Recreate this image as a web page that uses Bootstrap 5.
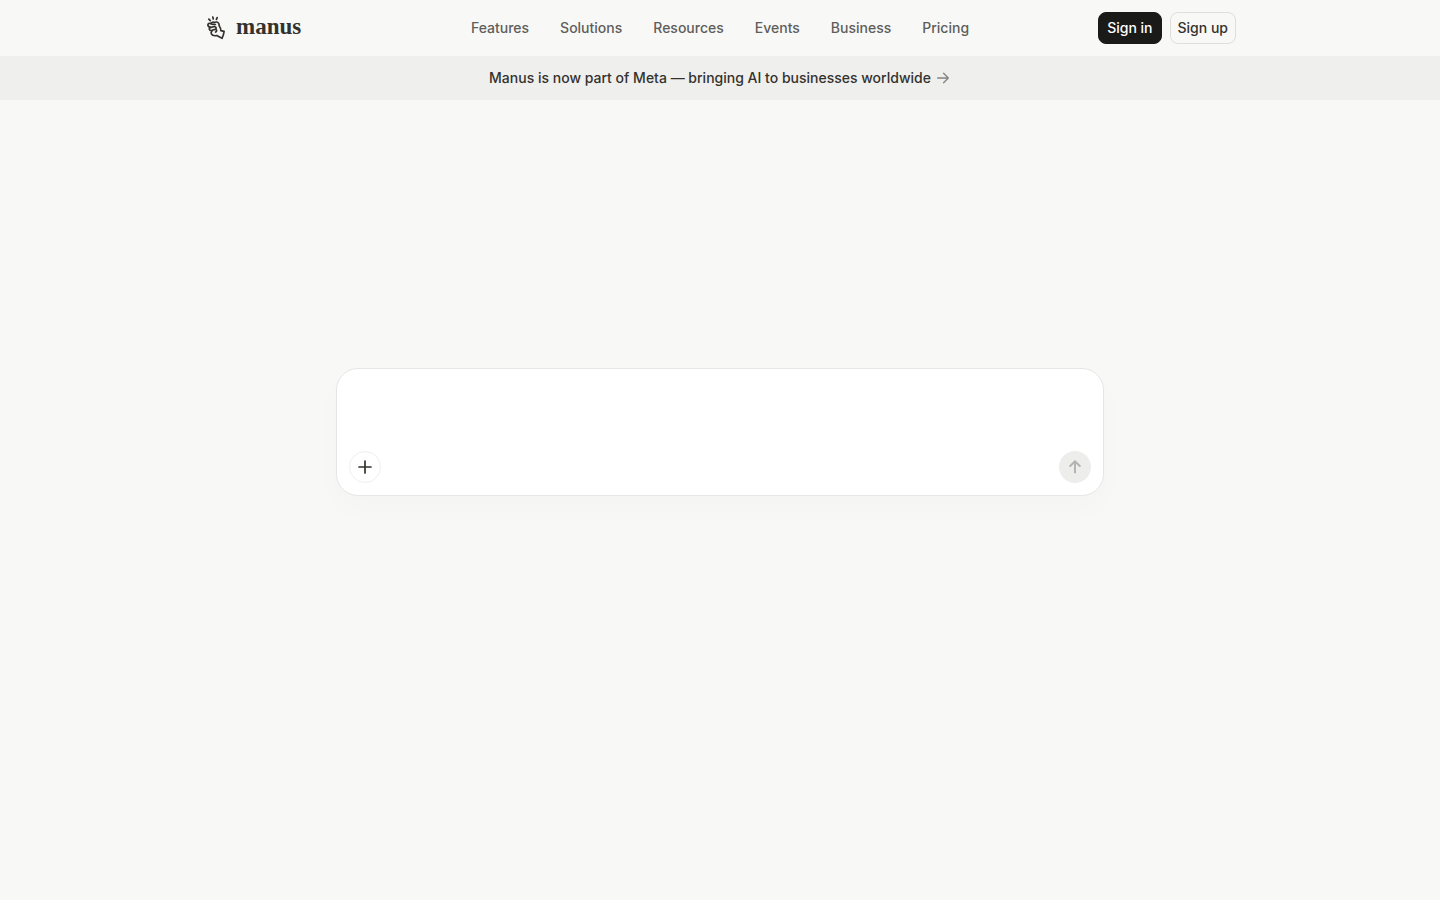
<!DOCTYPE html>
<html lang="en">
<head>
<meta charset="utf-8">
<meta name="viewport" content="width=device-width, initial-scale=1">
<title>Manus</title>
<link href="https://cdn.jsdelivr.net/npm/bootstrap@5.3.0/dist/css/bootstrap.min.css" rel="stylesheet">
<style>
  body { background: #f8f8f7; color: #34322d; font-family: Inter, "Liberation Sans", sans-serif; font-size: 14px; line-height: 20px; font-weight: 500; }
  .site-header { height: 56px; }
  .site-inner { max-width: 1080px; padding: 0 24px; }
  .side { flex: 1 1 0; }
  .wordmark { font-family: "Liberation Serif", serif; font-weight: 700; font-size: 23px; line-height: 24px; padding-bottom: 2px; }
  .brand-link, .brand-link:hover { color: #34322d; }
  .main-nav { gap: 31px; }
  .main-nav .nav-link { padding: 0; color: #5e5e5b; }
  .main-nav .nav-link:hover { color: #34322d; }
  .btn-auth { height: 32px; padding: 0 7px; border-radius: 8px; font-size: 14px; line-height: 20px; font-weight: 500; }
  .btn-in, .btn-in:hover { background: #1a1a19; border-color: #1a1a19; color: #fff; padding: 0 8px; }
  .btn-up, .btn-up:hover { border-color: #dededc; color: #34322d; }
  .announce { background: #efefed; height: 44px; }
  .announce a { color: #34322d; }
  .stage { padding: 0 24px 136px; }
  .composer { max-width: 768px; border: 1px solid #e6e6e5; border-radius: 22px; padding: 12px; box-shadow: 0 12px 32px rgba(0,0,0,.02); }
  .composer textarea { height: 70px; resize: none; border: 0; outline: 0; background: transparent; }
  .btn-round { width: 32px; height: 32px; }
  .btn-add { border: 1px solid #efefee; color: #34322d; }
  .btn-send, .btn-send:disabled { background: #ededec; border: 0; color: #b4b4b2; opacity: 1; }
</style>
</head>
<body class="min-vh-100 d-flex flex-column">
<header class="site-header d-flex align-items-center">
  <div class="site-inner w-100 mx-auto d-flex align-items-center">
    <div class="side d-flex">
      <a href="#" class="brand-link d-flex align-items-center text-decoration-none">
        <svg width="32" height="34" viewBox="4 1 32 34" fill="none" stroke="currentColor" stroke-width="1.7" stroke-linecap="round" stroke-linejoin="round" aria-hidden="true">
          <path d="M8.8 9.1l1.5 1.5M12.8 7l.5 2M17.2 7.6l-.8 1.8"/>
          <path d="M10.4 17.4c-1.8-.5-2.9-1.8-2.4-3.1.5-1.2 1.8-1.3 3-.6.6-1.4 2-1.9 3.3-1.2 1.3-.8 3.4-.7 4.2.7.7 1.2.5 2.4 1.2 3.5.9 1.1 1.3 2.2 1.1 3.9l3.3.8c-.3 2.4-1 4.7-2.1 6.9l-5.2-2.7c-2.4.4-4.6 0-5.4-1.7-.5-1-.3-2 .4-2.6"/>
          <path d="M11 13.7c1 1 2.6.7 4.4.8M10.4 17.4c1.6.1 2.4-1.2 4.2-.8 1.7.4 2.1 2 .8 2.7-1.3.6-2.3.2-3.6 1.3-1.5.2-2.4-.5-2.5-1.6-.1-.7.4-1.3 1.1-1.6M16 19.4c1 .8.8 2-.4 2.7"/>
        </svg>
        <span class="wordmark">manus</span>
      </a>
    </div>
    <nav class="nav main-nav flex-nowrap" aria-label="Main">
      <a class="nav-link" href="#">Features</a>
      <a class="nav-link" href="#">Solutions</a>
      <a class="nav-link" href="#">Resources</a>
      <a class="nav-link" href="#">Events</a>
      <a class="nav-link" href="#">Business</a>
      <a class="nav-link" href="#">Pricing</a>
    </nav>
    <div class="side d-flex justify-content-end gap-2">
      <button type="button" class="btn btn-auth btn-in text-nowrap">Sign in</button>
      <button type="button" class="btn btn-auth btn-up text-nowrap">Sign up</button>
    </div>
  </div>
</header>
<div class="announce d-flex align-items-center justify-content-center">
  <a href="#" class="d-flex align-items-center gap-1 text-decoration-none">
    <span>Manus is now part of Meta — bringing AI to businesses worldwide</span>
    <svg width="16" height="16" viewBox="0 0 16 16" fill="none" stroke="#858481" stroke-width="1.3" stroke-linecap="round" stroke-linejoin="round" aria-hidden="true"><path d="M2.7 8h10.6M8.6 3.3L13.3 8l-4.7 4.7"/></svg>
  </a>
</div>
<main class="stage flex-grow-1 d-flex align-items-center justify-content-center">
  <form class="composer w-100 bg-white d-flex flex-column">
    <textarea class="w-100 p-0" aria-label="Message"></textarea>
    <div class="d-flex justify-content-between">
      <button type="button" class="btn btn-round btn-add rounded-circle p-0 d-flex align-items-center justify-content-center" aria-label="Add">
        <svg width="16" height="16" viewBox="0 0 16 16" fill="none" stroke="currentColor" stroke-width="1.7" stroke-linecap="round"><path d="M2 8h12M8 2v12"/></svg>
      </button>
      <button type="submit" disabled class="btn btn-round btn-send rounded-circle p-0 d-flex align-items-center justify-content-center" aria-label="Send">
        <svg width="16" height="16" viewBox="0 0 16 16" fill="none" stroke="currentColor" stroke-width="2" stroke-linecap="round" stroke-linejoin="round"><path d="M8 13.5v-11M3.2 7L8 2.3 12.8 7"/></svg>
      </button>
    </div>
  </form>
</main>
<script src="https://cdn.jsdelivr.net/npm/bootstrap@5.3.0/dist/js/bootstrap.bundle.min.js"></script>
</body>
</html>
